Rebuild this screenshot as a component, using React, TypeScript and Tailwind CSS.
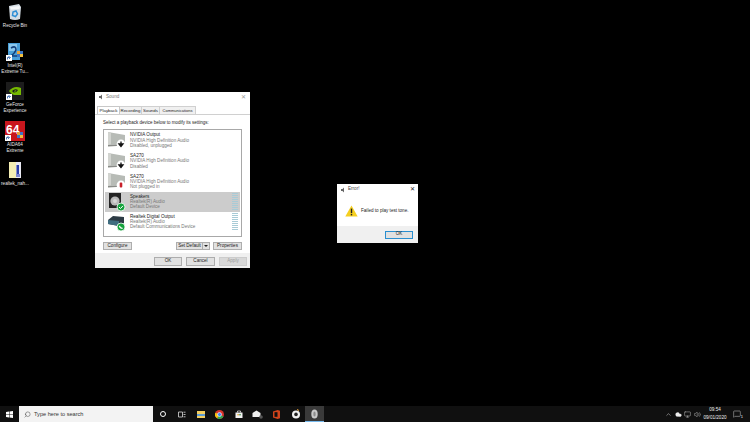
import type { ReactNode } from "react";
import { ChevronUp, Cloud, Monitor, Volume2, Search, MessageSquare } from "lucide-react";

const font = "font-['Liberation_Sans',Arial,sans-serif]";

function ShellBadge() {
  return (
    <svg width="6" height="6" viewBox="0 0 6 6" className="absolute bottom-0 left-0">
      <rect width="6" height="6" fill="#fff" />
      <path d="M1.5 4.5 L1.5 2.5 L3.5 2.5 M2.5 1.5 L4.5 2.5 L3 3.8" stroke="#1b4f9c" strokeWidth="0.8" fill="none" />
    </svg>
  );
}

function RecycleIcon() {
  return (
    <svg width="16" height="18" viewBox="0 0 16 18">
      <path d="M2 3 L12 1 L14 4 L13 16 Q8 18 3 16 Z" fill="#d5dde4" />
      <path d="M3 4 L13 3 L12.5 6 L4 6.5 Z" fill="#f4f6f8" />
      <path d="M6 9 L9 8 L10.5 11 L8.5 13.5 L5.5 12.5 Z" fill="none" stroke="#2f8fd6" strokeWidth="1.5" />
    </svg>
  );
}

function IntelIcon() {
  return (
    <div className="relative h-[18px] w-[18px]">
      <svg width="18" height="18" viewBox="0 0 18 18">
        <rect x="2" width="12" height="17" fill="#4a9fd8" />
        <rect x="3" y="1" width="8" height="7" fill="#8cc7ec" />
        <path d="M5 5 Q10 2 10 7 Q9 10 5 13 L11 13" stroke="#123f7a" strokeWidth="1.6" fill="none" />
        <rect x="11" y="8" width="3" height="3" fill="#e8a33b" />
        <rect x="14" y="8" width="3" height="3" fill="#3c78c8" />
        <rect x="11" y="11" width="3" height="3" fill="#3c78c8" />
        <rect x="14" y="11" width="3" height="3" fill="#f0c040" />
      </svg>
      <ShellBadge />
    </div>
  );
}

function NvidiaIcon() {
  return (
    <div className="relative h-[18px] w-[18px]">
      <svg width="18" height="18" viewBox="0 0 18 18">
        <rect width="18" height="18" fill="#1c1c1c" />
        <path d="M3 9 Q8 3 15 6 L15 13 L8 13 Q5 12 3 9 Z" fill="#76b900" />
        <path d="M6 9 Q9 6 12 8 Q10 11 7.5 10.5 Z" fill="#1c1c1c" />
        <path d="M8 9 Q9.5 8 10.5 8.5 Q9.5 10 8.5 9.8 Z" fill="#76b900" />
      </svg>
      <ShellBadge />
    </div>
  );
}

function AidaIcon() {
  return (
    <div className="relative h-[20px] w-[20px]">
      <svg width="20" height="20" viewBox="0 0 20 20">
        <rect width="20" height="20" fill="#c8161d" />
        <text x="1" y="13" fontSize="12" fontWeight="700" fill="#fff" fontFamily="Liberation Sans">64</text>
        <rect x="12" y="11" width="3" height="3" fill="#e8a33b" />
        <rect x="15" y="11" width="3" height="3" fill="#3c78c8" />
        <rect x="12" y="14" width="3" height="3" fill="#3c78c8" />
        <rect x="15" y="14" width="3" height="3" fill="#f0c040" />
      </svg>
      <ShellBadge />
    </div>
  );
}

function ZipIcon() {
  return (
    <svg width="14" height="17" viewBox="0 0 14 17">
      <rect x="1" width="12" height="16" fill="#f5efb4" />
      <rect x="8" width="5" height="16" fill="#e9e9f2" />
      <rect x="8.5" y="3" width="2.5" height="9" fill="#2c3fa8" />
      <rect x="8" y="12" width="4" height="3" fill="#7c86d0" />
    </svg>
  );
}

const desktopIcons = [
  { icon: <RecycleIcon />, label: ["Recycle Bin"] },
  { icon: <IntelIcon />, label: ["Intel(R)", "Extreme Tu..."] },
  { icon: <NvidiaIcon />, label: ["GeForce", "Experience"] },
  { icon: <AidaIcon />, label: ["AIDA64", "Extreme"] },
  { icon: <ZipIcon />, label: ["realtek_nah..."] },
];

function SpeakerShape({ status }: { status: "down" | "red" }) {
  return (
    <div className="relative h-[18px] w-[19px] shrink-0">
      <svg width="19" height="18" viewBox="0 0 19 18">
        <path d="M1 1 L18 4 L18 13 L1 14 Z" fill="#b7bbb6" />
        <path d="M1 1 L4 1.5 L4 13.8 L1 14 Z" fill="#d2d4d0" />
        <path d="M1 14 L18 13 L18 14.5 L1 15.5 Z" fill="#8a8c88" />
        <circle cx="14" cy="13" r="4.4" fill="#fff" />
        {status === "down" ? (
          <path d="M14 10.5 V14 M12 13 L14 15.5 L16 13 Z" stroke="#111" strokeWidth="1.3" fill="#111" />
        ) : (
          <rect x="12.7" y="10.5" width="2.6" height="5" rx="1" fill="#c8202a" />
        )}
      </svg>
    </div>
  );
}

function SpeakersGlyph() {
  return (
    <svg width="19" height="20" viewBox="0 0 19 20" className="shrink-0">
      <rect x="2" y="1" width="12" height="15" fill="#242424" />
      <circle cx="8" cy="9" r="4.6" fill="#b9b9b9" />
      <circle cx="8" cy="9" r="2" fill="#d6d6d6" />
      <circle cx="14" cy="15" r="4" fill="#15a33d" stroke="#fff" strokeWidth="0.8" />
      <path d="M12 15 L13.5 16.5 L16 13.8" stroke="#fff" strokeWidth="1" fill="none" />
    </svg>
  );
}

function DigitalGlyph() {
  return (
    <svg width="19" height="20" viewBox="0 0 19 20" className="shrink-0">
      <path d="M1 8 L6 4 L17 5 L17 11 L12 14 L1 12 Z" fill="#2d3b45" />
      <path d="M1 8 L12 9 L12 14 L1 12 Z" fill="#3f6d80" />
      <circle cx="14" cy="15" r="4" fill="#15a33d" stroke="#fff" strokeWidth="0.8" />
      <path d="M12.4 13.8 Q13 16.4 15.6 16.4" stroke="#fff" strokeWidth="1.2" fill="none" />
    </svg>
  );
}

function LevelMeter() {
  return (
    <div className="flex w-[6px] shrink-0 flex-col gap-[1px] self-center">
      {Array.from({ length: 9 }).map((_, i) => (
        <div key={i} className="h-[1px] bg-[#a8cbd6]" />
      ))}
    </div>
  );
}

const playbackRows = [
  { name: "NVIDIA Output", line2: "NVIDIA High Definition Audio", line3: "Disabled, unplugged", status: "down" as const },
  { name: "SA270", line2: "NVIDIA High Definition Audio", line3: "Disabled", status: "down" as const },
  { name: "SA270", line2: "NVIDIA High Definition Audio", line3: "Not plugged in", status: "red" as const },
];

function RowText({ name, line2, line3 }: { name: string; line2: string; line3: string }) {
  return (
    <div className="min-w-0 flex-1 text-[4.6px] leading-[5.3px] whitespace-nowrap">
      <div className="text-[#222]">{name}</div>
      <div className="text-[#777]">{line2}</div>
      <div className="text-[#777]">{line3}</div>
    </div>
  );
}

function WinButton({ label, className }: { label: string; className: string }) {
  return (
    <div className={`flex items-center justify-center border border-[#adadad] bg-[#e1e1e1] text-[4.6px] leading-none text-[#222] ${className}`}>
      {label}
    </div>
  );
}

function SoundDialog() {
  return (
    <div className={`absolute top-[92px] left-[95px] flex h-[176px] w-[155px] flex-col bg-[#f0f0f0] ${font}`}>
      <div className="flex h-[14px] shrink-0 items-center bg-white px-[3px] pb-[4px] text-[4.6px] text-[#777]">
        <svg width="6" height="6" viewBox="0 0 6 6" className="mr-[2px]">
          <path d="M1 2 H2.5 L4 0.5 V5.5 L2.5 4 H1 Z" fill="#666" />
        </svg>
        <span>Sound</span>
        <span className="ml-auto pr-[1px] text-[6px] text-[#999]">✕</span>
      </div>
      <div className="flex h-[8px] shrink-0 items-end bg-white pl-[2px] text-center text-[4.4px] leading-[7px] text-[#222]">
        <div className="h-[8px] w-[23px] border border-b-0 border-[#c8c8c8] bg-white">Playback</div>
        <div className="h-[8px] w-[22px] border-t border-r border-[#d0d0d0] bg-[#f0f0f0]">Recording</div>
        <div className="h-[8px] w-[18px] border-t border-r border-[#d0d0d0] bg-[#f0f0f0]">Sounds</div>
        <div className="h-[8px] w-[36px] border-t border-r border-[#d0d0d0] bg-[#f0f0f0] text-[4px]">Communications</div>
      </div>
      <div className="flex h-[139px] shrink-0 flex-col border-t border-[#d0d0d0] bg-white px-[8px] pt-[5px]">
        <div className="text-[4.5px] leading-[6px] text-[#222]">Select a playback device below to modify its settings:</div>
        <div className="mt-[3px] flex h-[108px] flex-col border border-[#a8a8a8] px-[1px]">
          {playbackRows.map((row) => (
            <div key={row.line3} className="flex h-[20.6px] items-center gap-[4px] pl-[2px]">
              <SpeakerShape status={row.status} />
              <RowText name={row.name} line2={row.line2} line3={row.line3} />
            </div>
          ))}
          <div className="flex h-[20px] items-center gap-[4px] bg-[#cccccc] pr-[2px] pl-[2px]">
            <SpeakersGlyph />
            <RowText name="Speakers" line2="Realtek(R) Audio" line3="Default Device" />
            <LevelMeter />
          </div>
          <div className="flex h-[20px] items-center gap-[4px] pr-[2px] pl-[2px]">
            <DigitalGlyph />
            <RowText name="Realtek Digital Output" line2="Realtek(R) Audio" line3="Default Communications Device" />
            <LevelMeter />
          </div>
        </div>
        <div className="mt-[5px] flex items-center">
          <WinButton label="Configure" className="h-[8px] w-[29px]" />
          <div className="ml-auto flex h-[8px] w-[34px] border border-[#adadad] bg-[#e1e1e1] text-[4.6px] leading-none text-[#222]">
            <div className="flex flex-1 items-center justify-center border-r border-[#adadad]">Set Default</div>
            <div className="flex w-[6px] items-center justify-center">
              <div className="h-0 w-0 border-x-[2px] border-t-[2px] border-x-transparent border-t-[#222]" />
            </div>
          </div>
          <WinButton label="Properties" className="ml-[3px] h-[8px] w-[29px]" />
        </div>
      </div>
      <div className="flex min-h-0 flex-1 items-start justify-end gap-[4px] pt-[4px] pr-[3px]">
        <WinButton label="OK" className="h-[9px] w-[28px]" />
        <WinButton label="Cancel" className="h-[9px] w-[29px]" />
        <div className="flex h-[9px] w-[28px] items-center justify-center border border-[#cccccc] bg-[#d8d8d8] text-[4.6px] leading-none text-[#9a9a9a]">Apply</div>
      </div>
    </div>
  );
}

function ErrorDialog() {
  return (
    <div className={`absolute top-[184px] left-[337px] flex h-[59px] w-[81px] flex-col bg-white ${font}`}>
      <div className="flex h-[11px] shrink-0 items-center px-[3px] text-[4.6px] text-[#444]">
        <svg width="6" height="6" viewBox="0 0 6 6" className="mr-[2px]">
          <path d="M1 2 H2.5 L4 0.5 V5.5 L2.5 4 H1 Z" fill="#666" />
        </svg>
        <span>Error!</span>
        <span className="ml-auto text-[6px] text-[#222]">✕</span>
      </div>
      <div className="flex flex-1 items-center gap-[3px] pt-[1px] pl-[8px]">
        <svg width="13" height="12" viewBox="0 0 13 12" className="shrink-0">
          <path d="M6.5 0.5 L12.7 11.5 L0.3 11.5 Z" fill="#f5cf1f" />
          <rect x="5.8" y="3.6" width="1.4" height="4.6" fill="#222" />
          <rect x="5.8" y="9" width="1.4" height="1.4" fill="#222" />
        </svg>
        <span className="text-[4.6px] whitespace-nowrap text-[#222]">Failed to play test tone.</span>
      </div>
      <div className="flex h-[17px] shrink-0 items-center justify-end bg-[#f0f0f0] pr-[5px]">
        <div className="flex h-[8px] w-[28px] items-center justify-center border border-[#2a8fd0] bg-[#e1e1e1] text-[4.6px] leading-none text-[#222]">OK</div>
      </div>
    </div>
  );
}

function TaskButton({ children, active }: { children: ReactNode; active?: boolean }) {
  return (
    <div className={`flex h-full w-[19px] items-center justify-center ${active ? "border-b border-[#76b9ed] bg-[#3a3a3a]" : ""}`}>
      {children}
    </div>
  );
}

function Taskbar() {
  return (
    <div className={`absolute right-0 bottom-0 left-0 flex h-[16px] items-center bg-[#101010] ${font}`}>
      <div className="flex w-[19px] items-center justify-center">
        <svg width="7" height="7" viewBox="0 0 7 7">
          <path d="M0 1 L3 0.5 V3.2 H0 Z M3.5 0.4 L7 0 V3.2 H3.5 Z M0 3.7 H3 V6.5 L0 6 Z M3.5 3.7 H7 V7 L3.5 6.6 Z" fill="#fff" />
        </svg>
      </div>
      <div className="flex h-full w-[134px] items-center bg-[#f3f3f3] pl-[5px] text-[5.6px] text-[#333]">
        <Search size={7} strokeWidth={1.5} className="mr-[3px] -scale-x-100 text-[#333]" />
        <span>Type here to search</span>
      </div>
      <TaskButton>
        <div className="h-[6px] w-[6px] rounded-full border border-white" />
      </TaskButton>
      <TaskButton>
        <svg width="8" height="7" viewBox="0 0 8 7">
          <path d="M0.5 1 H4.5 V6 H0.5 Z M5.5 1.2 H7.5 M5.5 3.5 H7.5 M5.5 5.8 H7.5" stroke="#ddd" strokeWidth="0.8" fill="none" />
        </svg>
      </TaskButton>
      <TaskButton>
        <svg width="8" height="7" viewBox="0 0 8 7">
          <rect width="8" height="7" fill="#f3cf62" />
          <rect y="3" width="8" height="2" fill="#5b9bd5" />
        </svg>
      </TaskButton>
      <TaskButton>
        <svg width="9" height="9" viewBox="0 0 9 9">
          <circle cx="4.5" cy="4.5" r="4.5" fill="#d8342b" />
          <path d="M4.5 4.5 L8.5 6.5 A4.5 4.5 0 0 1 2 8.3 Z" fill="#2fa84f" />
          <path d="M4.5 4.5 L2 8.3 A4.5 4.5 0 0 1 0.4 2.7 Z" fill="#f4c20d" />
          <circle cx="4.5" cy="4.5" r="2" fill="#4285f4" stroke="#fff" strokeWidth="0.6" />
        </svg>
      </TaskButton>
      <TaskButton>
        <svg width="8" height="8" viewBox="0 0 8 8">
          <path d="M0.5 2.5 H7.5 V8 H0.5 Z" fill="#f2f2f2" />
          <path d="M2.5 2.5 V1 H5.5 V2.5" stroke="#f2f2f2" strokeWidth="0.7" fill="none" />
          <rect x="2.4" y="4" width="1.4" height="1.4" fill="#e0a030" />
          <rect x="4.3" y="4" width="1.4" height="1.4" fill="#3d8b40" />
        </svg>
      </TaskButton>
      <TaskButton>
        <svg width="11" height="9" viewBox="0 0 11 9">
          <path d="M0.5 3 L4.5 0.5 L8.5 3 V7 H0.5 Z" fill="#eee" />
          <circle cx="9" cy="7" r="1.8" fill="#555" />
        </svg>
      </TaskButton>
      <TaskButton>
        <svg width="7" height="9" viewBox="0 0 7 9">
          <path d="M0 1.4 L4.6 0 L7 0.8 V8.2 L4.6 9 L0 7.6 Z" fill="#d0431b" />
          <rect x="1.5" y="2.2" width="3" height="4.6" fill="#101010" />
        </svg>
      </TaskButton>
      <TaskButton>
        <svg width="10" height="10" viewBox="0 0 10 10">
          <circle cx="5" cy="5.4" r="4" fill="#f0f0f0" />
          <circle cx="5" cy="5.4" r="1.8" fill="#222" />
          <path d="M6 0.5 L8 1.5" stroke="#e8a33b" strokeWidth="1" />
        </svg>
      </TaskButton>
      <TaskButton active>
        <svg width="7" height="10" viewBox="0 0 7 10">
          <ellipse cx="3.5" cy="5" rx="3.2" ry="4.6" fill="#c9c9c9" />
          <ellipse cx="3.5" cy="5" rx="1.2" ry="2.6" fill="#8d8d8d" />
        </svg>
      </TaskButton>
      <div className="ml-auto flex h-full items-center text-[#eee]">
        <ChevronUp size={7} strokeWidth={1.5} className="mr-[2.5px]" />
        <Cloud size={7} fill="#eee" strokeWidth={1} className="mr-[2.5px]" />
        <Monitor size={7} strokeWidth={1.3} className="mr-[2.5px]" />
        <Volume2 size={7} strokeWidth={1.3} className="mr-[2.5px]" />
        <div className="flex w-[24px] flex-col items-center text-[4.6px] leading-[8px]">
          <span>09:54</span>
          <span>09/01/2020</span>
        </div>
        <div className="relative mr-[7px] ml-[4px] flex w-[12px] justify-center">
          <MessageSquare size={8} strokeWidth={1.3} />
          <span className="absolute right-[0px] bottom-[-2px] text-[4px]">1</span>
        </div>
      </div>
    </div>
  );
}

export default function App() {
  return (
    <div className="relative h-[422px] w-[750px] overflow-hidden bg-black">
      <div className={`absolute top-[2px] left-0 flex w-[30px] flex-col ${font}`}>
        {desktopIcons.map((item) => (
          <div key={item.label[0]} className="flex h-[39.5px] flex-col items-center">
            <div className="flex h-[20px] items-center justify-center">{item.icon}</div>
            <div className="mt-[1px] text-center text-[4.6px] leading-[6px] whitespace-nowrap text-[#e8e8e8]">
              {item.label.map((line) => (
                <div key={line}>{line}</div>
              ))}
            </div>
          </div>
        ))}
      </div>
      <SoundDialog />
      <ErrorDialog />
      <Taskbar />
    </div>
  );
}
